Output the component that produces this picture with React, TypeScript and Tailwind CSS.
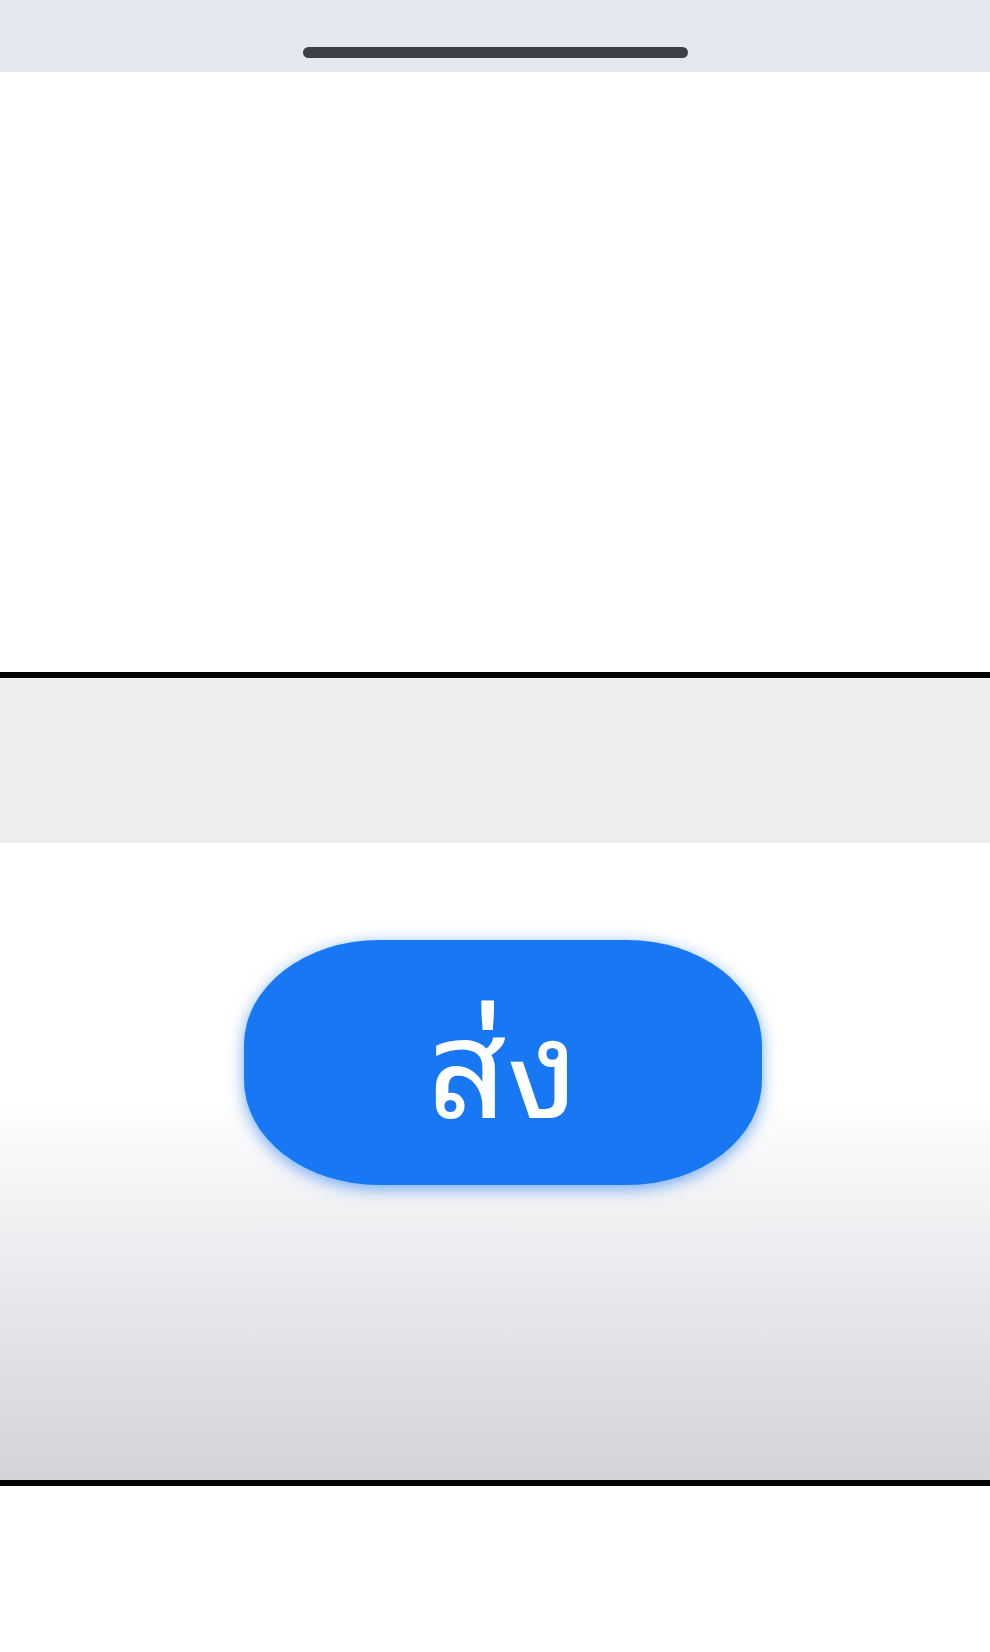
export default function App() {
  return (
    <div className="w-[990px] min-h-[1652px] bg-white flex flex-col">
      {/* sheet handle */}
      <div className="h-[72px] bg-[#e5e8f1] flex justify-center pt-[47px]">
        <div className="w-[385px] h-[11px] rounded-full bg-[#3e4049]" />
      </div>

      {/* empty content */}
      <div className="h-[600px] bg-white" />

      <div className="h-[6px] bg-black" />

      {/* input strip */}
      <div className="h-[165px] bg-[#eeeeee]" />

      {/* send area */}
      <div className="h-[637px] bg-[linear-gradient(to_bottom,#ffffff_0%,#ffffff_40%,#f7f7f9_50%,#ececf0_65%,#dddde3_85%,#d3d3d9_100%)] flex justify-center pt-[97px] pl-[16px]">
        <button
          className="w-[518px] h-[245px] rounded-[135px/105px] bg-[#1877f2] text-white text-[138px] leading-none flex items-center justify-center pb-[14px] shadow-[0_4px_16px_rgba(24,119,242,0.6)]"
          style={{ fontFamily: '"Noto Sans Thai Looped", "DejaVu Sans", sans-serif' }}
        >
          ส่ง
        </button>
      </div>

      <div className="h-[6px] bg-black" />

      <div className="flex-1 bg-white" />
    </div>
  );
}
